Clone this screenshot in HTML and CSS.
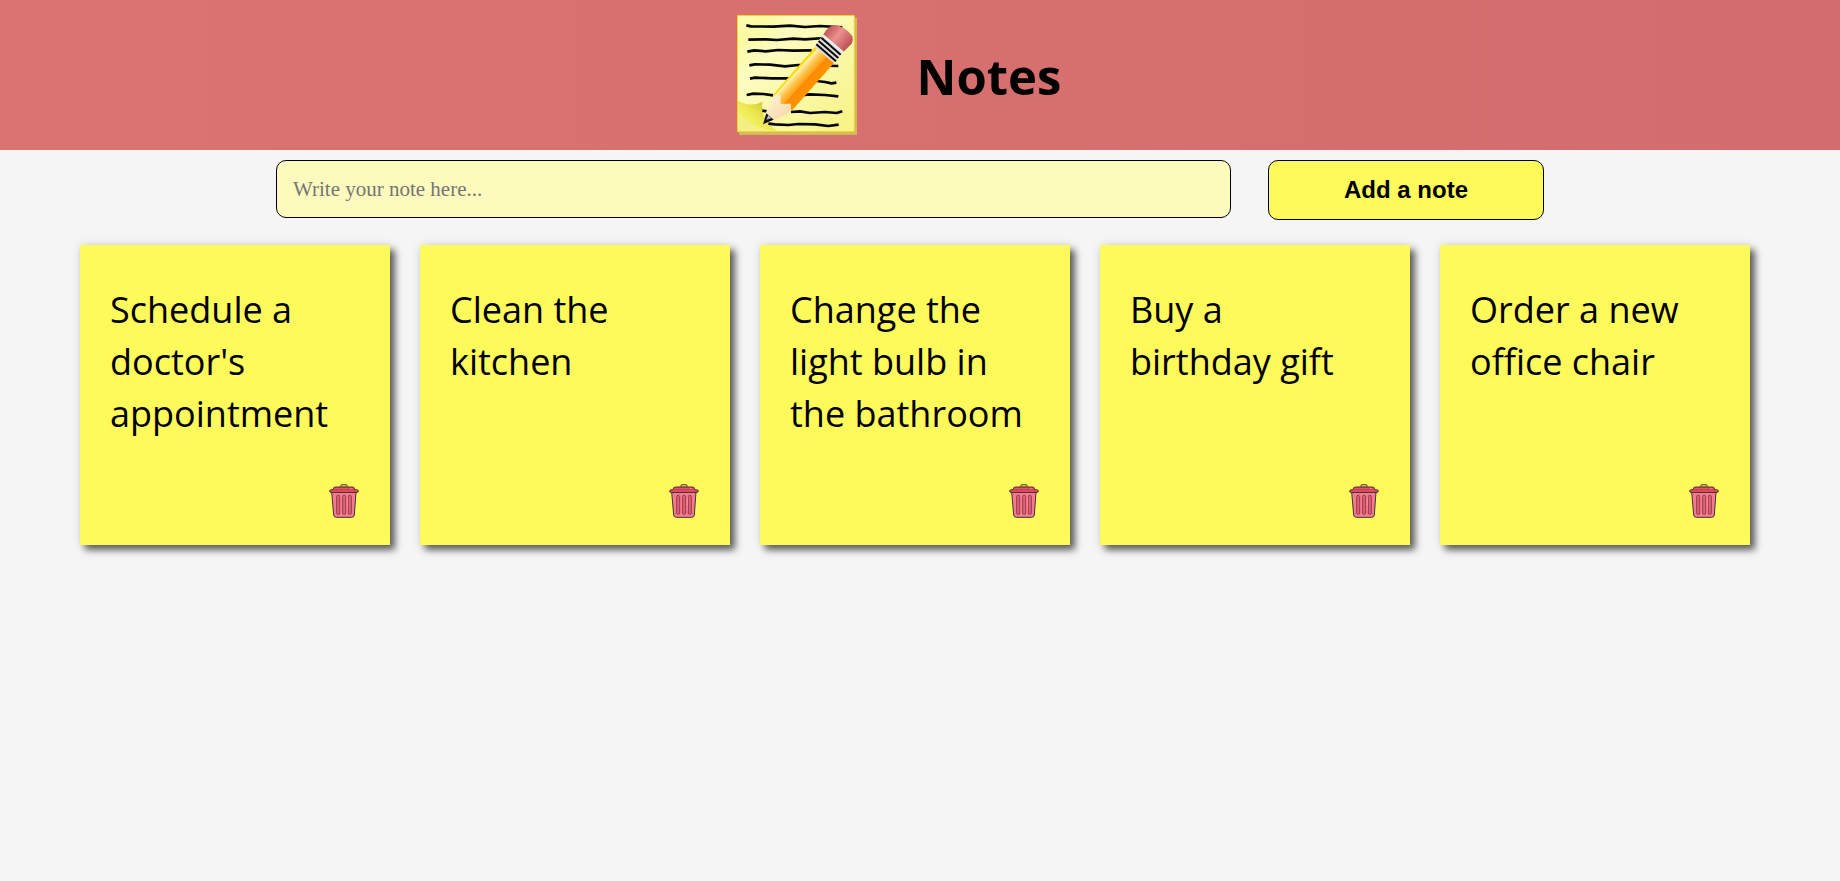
FILE: index.html
```html
<!DOCTYPE html>
<html lang="en">
<head>
<meta charset="utf-8">
<meta name="viewport" content="width=device-width, initial-scale=1">
<title>Notes</title>
<link rel="stylesheet" href="styles.css">
</head>
<body>
<svg width="0" height="0" class="sprite" aria-hidden="true">
  <symbol id="trash" viewBox="0 0 90 102">
    <path d="M36 9V3q0-1 2-1h14q2 0 2 1v6" fill="#d8d050" stroke="#5a5230" stroke-width="3"/>
    <path d="M8 24 14 93q1 7 8 7h46q7 0 8-7l5-69z" fill="#f27b90" stroke="#42303a" stroke-width="3"/>
    <path d="M12 17q1-8 7-8h52q6 0 6 8l9 1q2 1 2 3 0 4-4 4H6q-4 0-4-4 0-2 2-3z" fill="#ee5068" stroke="#4a2a30" stroke-width="3"/>
    <path d="M14 17h62" stroke="#92394a" stroke-width="2"/>
    <g fill="#ee5a70" stroke="#8c4050" stroke-width="3">
      <rect x="23" y="34" width="9" height="57" rx="4"/>
      <rect x="41" y="34" width="9" height="57" rx="4"/>
      <rect x="58" y="34" width="9" height="57" rx="4"/>
    </g>
    <path d="M63 14h5M55 40v28M55 74v5" stroke="#f9a5a8" stroke-width="2"/>
  </symbol>
</svg>
<header class="header">
  <svg class="logo" viewBox="36 30 360 360" aria-hidden="true">
    <defs>
      <linearGradient id="paper" x1="0" y1="0" x2="1" y2="1"><stop offset="0" stop-color="#fdfdb4"/><stop offset=".12" stop-color="#fafaa4"/><stop offset=".3" stop-color="#fcfcc0"/><stop offset="1" stop-color="#f7f384"/></linearGradient>
      <linearGradient id="curl" gradientUnits="userSpaceOnUse" x1="60" y1="350" x2="110" y2="290"><stop offset="0" stop-color="#f4f26a"/><stop offset=".45" stop-color="#ecea50"/><stop offset="1" stop-color="#d2ce36"/></linearGradient>
      <linearGradient id="body" gradientUnits="userSpaceOnUse" x1="205" y1="195" x2="260" y2="245"><stop offset="0" stop-color="#ffd000"/><stop offset=".1" stop-color="#ffdc00"/><stop offset=".16" stop-color="#fff0b0"/><stop offset=".42" stop-color="#ffc040"/><stop offset=".62" stop-color="#ffa51c"/><stop offset=".66" stop-color="#ff8a00"/><stop offset="1" stop-color="#ff9200"/></linearGradient>
      <linearGradient id="eraser" gradientUnits="userSpaceOnUse" x1="310" y1="75" x2="372" y2="125"><stop offset="0" stop-color="#c85c60"/><stop offset=".4" stop-color="#ec9090"/><stop offset="1" stop-color="#bc5054"/></linearGradient>
      <linearGradient id="wood" x1="0" y1="0" x2="1" y2="1"><stop offset="0" stop-color="#fff6dc"/><stop offset="1" stop-color="#f7d2a0"/></linearGradient>
    </defs>
    <path d="M42 38H396V390H42z" fill="#d2b95c"/>
    <path d="M37.500 31.500H388V380H37.500z" fill="url(#paper)" stroke="#f3d22c" stroke-width="3"/>
    <path d="M39 288Q78 308 112 290Q106 346 158 378Q74 374 39 326z" fill="url(#curl)"/>
    <path d="M39 328Q74 374 150 378H39z" fill="#f3ee86"/>
    <g fill="none" stroke="#050505" stroke-width="8" stroke-linejoin="round">
      <path d="M64 61 78 64 145 65 195 62 240 66 285 63 352 67"/>
      <path d="M70 104 125 103 155 105 205 101 240 103 300 99"/>
      <path d="M67 140 88 136 122 139 160 135 205 137 260 136"/>
      <path d="M73 181 90 178 135 179 180 184 220 180 340 183"/>
      <path d="M75 221 90 218 140 220 200 220"/>
      <path d="M275 228 300 231 320 235 334 233"/>
      <path d="M65 270 85 266 115 267 145 271M215 272 255 268 300 270 340 274"/>
      <path d="M112 317 145 322M198 321 225 319 255 324 300 321 335 324 352 319"/>
      <path d="M130 356 150 358 190 360 220 357 270 358 310 363 341 359"/>
    </g>
    <path d="M114 358 124 319 139 293 146 268 167 271 167 296 197 296 199 316 178 332 145 346z" fill="url(#wood)"/>
    <path d="M114 358 124 325 146 344z" fill="#111"/>
    <path d="M124 344 130 330 139 340z" fill="#bbb"/>
    <path d="M143 271 271 125 327 174 199 319 197 296 167 296 167 271z" fill="url(#body)"/>
    <path d="M294 88 352 139 328 175 269 126z" fill="#ddd"/>
    <g fill="none" stroke="#0a0a0a" stroke-width="6">
      <path d="M289 98 347 149M281 108 340 159M274 118 333 169"/>
    </g>
    <path d="M294 91Q306 64 329 60Q359 62 382 94Q386 105 380 116L354 142z" fill="url(#eraser)"/>
    <path d="M294 91 354 142" stroke="#ededed" stroke-width="7"/>
  </svg>
  <h1 class="title">Notes</h1>
</header>
<main>
  <form class="note-form">
    <input class="note-input" type="text" placeholder="Write your note here..." aria-label="Note text">
    <button class="add-button" type="button">Add a note</button>
  </form>
  <section class="notes" aria-label="Notes">
    <article class="note"><p class="note-text">Schedule a doctor's appointment</p><button class="delete" type="button" aria-label="Delete note"><svg class="trash" aria-hidden="true"><use href="#trash"/></svg></button></article>
    <article class="note"><p class="note-text">Clean the kitchen</p><button class="delete" type="button" aria-label="Delete note"><svg class="trash" aria-hidden="true"><use href="#trash"/></svg></button></article>
    <article class="note"><p class="note-text">Change the light bulb in the bathroom</p><button class="delete" type="button" aria-label="Delete note"><svg class="trash" aria-hidden="true"><use href="#trash"/></svg></button></article>
    <article class="note"><p class="note-text">Buy a birthday gift</p><button class="delete" type="button" aria-label="Delete note"><svg class="trash" aria-hidden="true"><use href="#trash"/></svg></button></article>
    <article class="note"><p class="note-text">Order a new office chair</p><button class="delete" type="button" aria-label="Delete note"><svg class="trash" aria-hidden="true"><use href="#trash"/></svg></button></article>
  </section>
</main>
</body>
</html>
```
FILE: styles.css
```css
* {
  box-sizing: border-box;
}

body {
  margin: 0;
  background: #f5f5f5;
  color: #000;
  font-family: "Comic Sans MS", "Open Sans", sans-serif;
}

.sprite {
  position: absolute;
}

.header {
  display: flex;
  align-items: center;
  justify-content: center;
  gap: 60px;
  padding: 15px 42px 15px 0;
  background: linear-gradient(to right, #db7373, #d36c6c);
}

.logo {
  display: block;
  width: 120px;
  height: 120px;
}

.title {
  margin: 0;
  padding-top: 2px;
  font-size: 49px;
  font-weight: 700;
  line-height: 60px;
}

.note-form {
  display: grid;
  grid-template-columns: 1fr 276px;
  align-items: start;
  gap: 37px;
  padding: 10px 296px 0 276px;
}

.note-input {
  width: 100%;
  height: 58px;
  padding: 0 16px;
  border: 1px solid #000;
  border-radius: 10px;
  background: #fdfabd;
  font-family: Georgia, "Liberation Serif", serif;
  font-size: 21px;
}

.note-input::placeholder {
  color: #757575;
}

.add-button {
  height: 60px;
  border: 1px solid #000;
  border-radius: 10px;
  background: #fffa5c;
  color: #000;
  font-family: Arial, "Liberation Sans", sans-serif;
  font-size: 24px;
  font-weight: 700;
}

.notes {
  display: grid;
  grid-template-columns: repeat(auto-fill, minmax(300px, 1fr));
  gap: 30px;
  padding: 25px 90px 30px 80px;
}

.note {
  display: flex;
  flex-direction: column;
  justify-content: space-between;
  min-height: 300px;
  padding: 39px 30px 27px;
  background: #fffa5c;
  box-shadow: 5px 5px 7px rgba(33, 33, 33, 0.7), 0 0 10px rgba(0, 0, 0, 0.1);
}

.note-text {
  margin: 0;
  padding-right: 12px;
  font-size: 36px;
  line-height: 52px;
}

.delete {
  align-self: flex-end;
  padding: 0;
  border: 0;
  background: none;
}

.trash {
  display: block;
  width: 32px;
  height: 34px;
}
```
